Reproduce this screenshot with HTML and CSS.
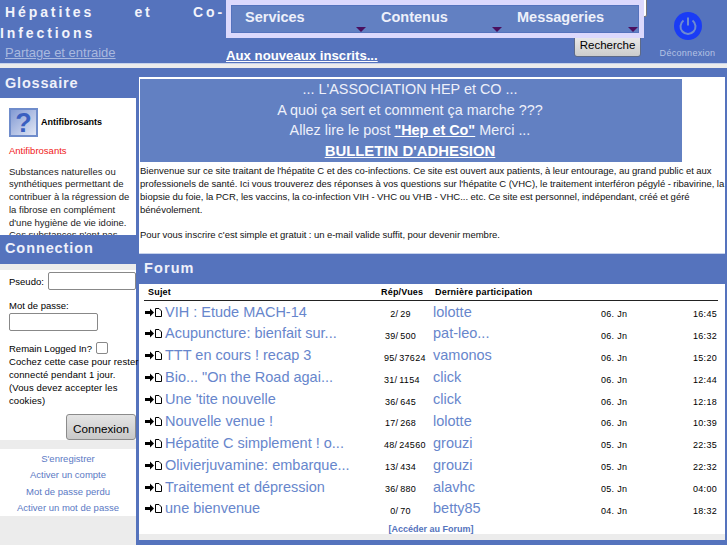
FILE: index.html
```html
<!DOCTYPE html>
<html lang="fr">
<head>
    <meta charset="UTF-8">
    <meta name="viewport" content="width=device-width, initial-scale=1.0">
    <title>Hépatites et Co-Infections</title>
    <link rel="stylesheet" href="styles.css">
</head>
<body>
    <header class="top">
        <div class="brand">
            <h1>Hépatites et Co-Infections</h1>
            <a class="tagline" href="#">Partage et entraide</a>
        </div>
        <div class="top-mid">
            <form class="search">
                <input type="text" class="search-input">
                <button type="button" class="search-btn">Recherche</button>
            </form>
            <nav class="menu">
                <a href="#">Services<span class="arrow"></span></a>
                <a href="#">Contenus<span class="arrow"></span></a>
                <a href="#">Messageries<span class="arrow"></span></a>
            </nav>
            <a class="new-users" href="#">Aux nouveaux inscrits...</a>
        </div>
        <a class="logout" href="#">
            <svg width="30" height="30" viewBox="0 0 30 30">
                <circle cx="15" cy="15" r="14" fill="#1a3cf5"/>
                <path d="M10.5 9.5a7.5 7.5 0 1 0 9 0" fill="none" stroke="#6e8bd0" stroke-width="2"/>
                <path d="M15 6.5v8" fill="none" stroke="#6e8bd0" stroke-width="2"/>
            </svg>
            <span>Déconnexion</span>
        </a>
    </header>
    <div class="strip"></div>

    <div class="page">
        <aside class="side">
            <h2 class="side-title">Glossaire</h2>
            <div class="glossary">
                <div class="term">
                    <svg class="term-icon" width="29" height="29" viewBox="0 0 29 29">
                        <defs>
                            <linearGradient id="qbg" x1="0" y1="0" x2="1" y2="1">
                                <stop offset="0" stop-color="#7f97d2"/>
                                <stop offset="1" stop-color="#e4e9f6"/>
                            </linearGradient>
                        </defs>
                        <rect x="1" y="1" width="27" height="27" fill="url(#qbg)" stroke="#6f8ccb" stroke-width="2"/>
                        <text x="14.5" y="24" text-anchor="middle" class="term-mark">?</text>
                    </svg>
                    <b>Antifibrosants</b>
                </div>
                <p class="term-red">Antifibrosants</p>
                <p class="term-text">Substances naturelles ou synthétiques permettant de contribuer à la régression de la fibrose en complément d'une hygiène de vie idoine. Ces substances n'ont pas</p>
            </div>
            <h2 class="side-title conn">Connection</h2>
            <form class="login">
                <label class="pseudo">Pseudo: <input type="text" class="pseudo-input"></label>
                <label class="pass" for="pw">Mot de passe:</label>
                <input type="password" id="pw" class="pass-input">
                <div class="remain">Remain Logged In? <input type="checkbox"></div>
                <p class="remain-note">Cochez cette case pour rester connecté pendant 1 jour. (Vous devez accepter les cookies)</p>
                <div class="login-foot"><button type="button" class="login-btn">Connexion</button></div>
            </form>
            <ul class="login-links">
                <li><a href="#">S'enregistrer</a></li>
                <li><a href="#">Activer un compte</a></li>
                <li><a href="#">Mot de passe perdu</a></li>
                <li><a href="#">Activer un mot de passe</a></li>
            </ul>
        </aside>

        <main class="content">
            <section class="welcome">
                <div class="banner">
                    <p>... L'ASSOCIATION HEP et CO ...</p>
                    <p>A quoi ça sert et comment ça marche ???</p>
                    <p>Allez lire le post <a href="#"><b>"Hep et Co"</b></a> Merci ...</p>
                    <p><a href="#" class="bulletin">BULLETIN D'ADHESION</a></p>
                </div>
                <p class="intro">Bienvenue sur ce site traitant de l'hépatite C et des co-infections. Ce site est ouvert aux patients, à leur entourage, au grand public et aux professionels de santé. Ici vous trouverez des réponses à vos questions sur l'hépatite C (VHC), le traitement interféron pégylé - ribavirine, la biopsie du foie, la PCR, les vaccins, la co-infection VIH - VHC ou VHB - VHC... etc. Ce site est personnel, indépendant, créé et géré bénévolement.</p>
                <p class="intro">Pour vous inscrire c'est simple et gratuit : un e-mail valide suffit, pour devenir membre.</p>
            </section>

            <section class="forum">
                <h2 class="forum-title">Forum</h2>
                <div class="forum-body">
                    <table class="topics">
                        <colgroup>
                            <col class="w-sub"><col class="w-rep"><col class="w-user"><col class="w-date"><col>
                        </colgroup>
                        <thead>
                            <tr><th class="c-sub">Sujet</th><th class="c-rep-h">Rép/Vues</th><th colspan="3" class="c-last">Dernière participation</th></tr>
                        </thead>
                        <tbody id="topic-rows"></tbody>
                    </table>
                    <a class="forum-link" href="#">[Accéder au Forum]</a>
                </div>
            </section>
        </main>
    </div>

    <script>
        const topics = [
            ["VIH : Etude MACH-14", "2/ 29", "lolotte", "06. Jn", "16:45"],
            ["Acupuncture: bienfait sur...", "39/ 500", "pat-leo...", "06. Jn", "16:32"],
            ["TTT en cours ! recap 3", "95/ 37624", "vamonos", "06. Jn", "15:20"],
            ["Bio... \"On the Road agai...", "31/ 1154", "click", "06. Jn", "12:44"],
            ["Une 'tite nouvelle", "36/ 645", "click", "06. Jn", "12:18"],
            ["Nouvelle venue !", "17/ 268", "lolotte", "06. Jn", "10:39"],
            ["Hépatite C simplement ! o...", "48/ 24560", "grouzi", "05. Jn", "22:35"],
            ["Olivierjuvamine: embarque...", "13/ 434", "grouzi", "05. Jn", "22:32"],
            ["Traitement et dépression", "36/ 880", "alavhc", "05. Jn", "04:00"],
            ["une bienvenue", "0/ 70", "betty85", "04. Jn", "18:32"]
        ];
        const icon = '<svg class="t-icon" width="17" height="9" viewBox="0 0 17 9"><path d="M0 3h5V.5l4 4-4 4V6H0z" fill="#000"/><path d="M10.5.5h3.500l2.500 2.500v5.500h-6z" fill="#fff" stroke="#000"/></svg>';
        document.getElementById('topic-rows').innerHTML = topics.map(t =>
            `<tr><td class="c-sub">${icon}<a href="#">${t[0]}</a></td><td class="c-rep">${t[1]}</td><td class="c-user"><a href="#">${t[2]}</a></td><td class="c-date">${t[3]}</td><td class="c-time">${t[4]}</td></tr>`
        ).join('');
    </script>
</body>
</html>
```
FILE: styles.css
```css
html, body { margin: 0; padding: 0; height: 545px; overflow: hidden; }
body { font-family: "Liberation Sans", Arial, sans-serif; background-color: #5573bd; color: #000; }
a { color: inherit; }
p { margin: 0; }

/* Header */
.top { display: flex; height: 63px; background-color: #5573bd; border-bottom: 1px solid #c6d2ec; }
.brand { width: 225px; flex: none; }
.brand h1 { margin: 0; padding-top: 2px; font-size: 14px; line-height: 21px; font-weight: bold; letter-spacing: 2.9px; color: #f2f3fb; text-align: justify; text-indent: 5px; }
.tagline { display: block; margin: 1px 0 0 5px; font-size: 13px; line-height: 15px; color: #a9b9df; }
.top-mid { width: 423px; flex: none; position: relative; padding-left: 1px; box-sizing: border-box; }
.menu { position: relative; display: flex; width: 418px; height: 38px; box-sizing: border-box; background-color: #6280c2; border: 5px solid #dcd9fd; box-shadow: inset 0 0 0 1px #5573bd; }
.menu a { position: relative; flex: 1; padding: 3px 0 0 14px; font-size: 14.5px; font-weight: bold; line-height: 18px; color: #eef0fa; text-decoration: none; }
.menu .arrow { position: absolute; right: 1px; bottom: 1px; width: 0; height: 0; border: 5px solid transparent; border-top: 5px solid #4a0f5e; border-bottom-width: 0; }
.new-users { display: block; margin-top: 9px; font-size: 13.2px; line-height: 17px; font-weight: bold; color: #fff; }
.search { position: absolute; left: 349px; top: 0; width: 74px; }
.search-input { position: absolute; right: 1px; top: -2px; width: 60px; height: 19px; box-sizing: border-box; background: #fff; border: 1px solid #777; border-radius: 2px; }
.search-btn { position: absolute; left: 0; top: 33px; width: 67px; height: 24px; padding: 0; font: 11.5px "Liberation Sans", Arial, sans-serif; color: #000; background: linear-gradient(#eee, #ccc); border: 1px solid #5d6a88; border-radius: 3px; }
.logout { flex: 1; display: flex; flex-direction: column; align-items: center; padding-top: 11px; font-size: 9px; color: #b5c3e4; text-decoration: none; }
.logout span { margin-top: 7px; letter-spacing: 0.3px; }
.strip { height: 4px; background-color: #ececec; border-bottom: 1px solid #5573bd; }

/* Two columns */
.page { display: flex; height: 477px; }
.side { width: 136px; flex: none; background-color: #ececec; }
.side-title { margin: 0; height: 29px; line-height: 28px; padding-left: 5px; font-size: 14.5px; letter-spacing: 0.8px; color: #eef0fa; background-color: #5573bd; }
.glossary { height: 137px; overflow: hidden; background-color: #fff; padding: 10px 0 0 9px; box-sizing: border-box; font-size: 9.5px; line-height: 12.7px; }
.term { display: flex; align-items: center; gap: 3px; font-size: 9px; }
.term-mark { font: bold 27px "Liberation Sans", Arial, sans-serif; fill: #3a5fc0; }
.term-red { margin-top: 8px; color: #f02020; }
.term-text { margin-top: 8px; width: 124px; color: #222; }
.side-title.conn { height: 29px; line-height: 27px; letter-spacing: 0.9px; }
.login { margin-top: 6px; height: 170px; box-sizing: border-box; background-color: #fff; padding: 2px 0 0 9px; font-size: 9.5px; position: relative; }
.pseudo { display: flex; align-items: center; gap: 4px; }
.pseudo-input { width: 88px; height: 18px; box-sizing: border-box; margin: 0; flex: none; border: 1px solid #888; border-radius: 2px; }
.pass { display: block; margin-top: 10px; line-height: 12px; }
.pass-input { display: block; width: 89px; height: 18px; box-sizing: border-box; margin: 1px 0 0; border: 1px solid #888; border-radius: 2px; }
.remain { display: flex; align-items: center; gap: 4px; margin-top: 10px; height: 14px; }
.remain input { width: 12px; height: 12px; margin: 0; appearance: none; background: #fff; border: 1px solid #888; border-radius: 2px; }
.remain-note { margin-top: 1px; width: 130px; line-height: 12.9px; letter-spacing: 0.1px; }
.login-foot { position: absolute; right: 0; bottom: 0; }
.login-btn { display: block; width: 70px; height: 26px; padding: 2px 0 0; font: 11.7px "Liberation Sans", Arial, sans-serif; color: #000; background: linear-gradient(#e4e4e4, #c8c8c8); border: 1px solid #8b8b8b; border-radius: 3px; }
.login-links { list-style: none; margin: 9px 0 0; padding: 2px 0 0; height: 67px; box-sizing: border-box; background-color: #fff; text-align: center; font-size: 9.5px; }
.login-links li { line-height: 16.3px; }
.login-links a { color: #5b79c4; text-decoration: none; }

/* Main */
.content { flex: 1; padding: 0 2px 0 3px; }
.welcome { margin-top: 8px; height: 177px; box-sizing: border-box; padding: 2px 0 0 1px; background-color: #fff; border-bottom: 1px solid #c6d2ec; }
.banner { width: 542px; height: 83px; box-sizing: border-box; padding-right: 2px; background-color: #6280c2; color: #eef0fa; text-align: center; font-size: 14.4px; line-height: 20.7px; }
.banner a { color: #fff; }
.bulletin { font-weight: bold; font-size: 14.9px; }
.intro { font-size: 9.5px; line-height: 13px; margin-top: 2px; word-spacing: -0.2px; color: #111; }
.intro + .intro { margin-top: 12px; }
.forum-title { margin: 0; height: 30px; line-height: 28px; padding-left: 5px; font-size: 14.5px; letter-spacing: 1.1px; color: #eef0fa; background-color: #5573bd; }
.forum-body { background-color: #fff; height: 256px; box-sizing: border-box; padding: 0 7px 0 5px; text-align: center; border-bottom: 6px solid #ececec; }
.topics { width: 574px; border-collapse: collapse; table-layout: fixed; font-size: 9px; text-align: left; letter-spacing: 0.3px; }
.w-sub { width: 234px; }
.w-rep { width: 55px; }
.w-user { width: 168px; }
.w-date { width: 90px; }
.topics th { height: 16px; padding: 0; font-size: 9px; letter-spacing: 0.2px; border-bottom: 1px solid #222; }
.topics td { height: 21.9px; box-sizing: border-box; padding: 0; white-space: nowrap; }
th.c-sub { padding-left: 4px; }
th.c-rep-h { padding-left: 3px; white-space: nowrap; }
th.c-last { padding-left: 2px; }
td.c-sub a, td.c-user a { font-size: 14.5px; letter-spacing: 0; color: #6786cc; text-decoration: none; }
.t-icon { margin: 0 3px 0 1px; }
td.c-rep { padding: 5px 16px 0 6px; text-align: center; word-spacing: -1px; }
td.c-date, td.c-time { padding-top: 5px; }
td.c-time { text-align: right; padding-right: 1px; }
.forum-link { display: block; margin-top: 5px; font-size: 9px; font-weight: bold; color: #5573bd; text-decoration: none; }
```
